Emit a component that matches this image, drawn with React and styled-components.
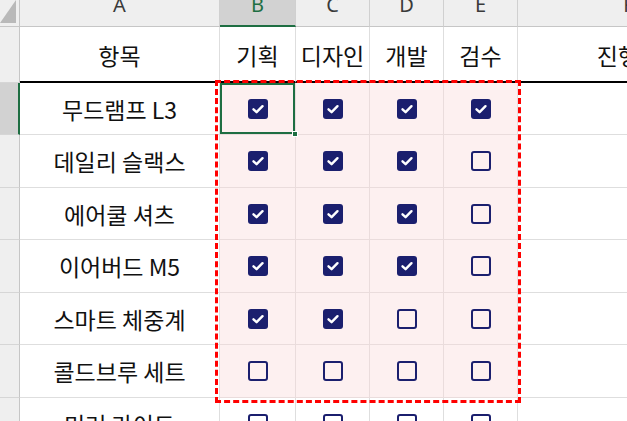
import React from "react";
import styled, { createGlobalStyle, css } from "styled-components";

const GlobalStyle = createGlobalStyle`
  html, body {
    margin: 0;
    padding: 0;
    background: #ffffff;
    overflow: hidden;
  }
  body {
    font-family: "Noto Sans CJK KR", "Noto Sans", sans-serif;
  }
`;

const NAVY = "#1b1f6e";
const GREEN = "#1e6e42";

const Sheet = styled.div`
  position: relative;
  display: grid;
  grid-template-columns: 20px 200px 76px 74px 74px 74px 222px;
  grid-template-rows: 27px 56px 52px 53px 52px 53px 52px 53px 52px;
  width: 740px;
`;

const Corner = styled.div`
  background: #efefef;
  border-right: 1px solid #c6c6c6;
  border-bottom: 1px solid #c6c6c6;
  box-sizing: border-box;
  display: flex;
  align-items: flex-end;
  justify-content: flex-end;
  padding: 0 3px 3px 0;
`;

const CornerMark = styled.div`
  width: 16px;
  height: 23px;
  background: #b9b9b9;
  clip-path: polygon(100% 0, 100% 100%, 0 100%);
`;

const ColHead = styled.div`
  box-sizing: border-box;
  background: ${(p) => (p.$active ? "#d2d2d2" : "#efefef")};
  border-right: 1px solid #d0d0d0;
  border-bottom: ${(p) => (p.$active ? `2px solid ${GREEN}` : "1px solid #c6c6c6")};
  color: ${(p) => (p.$active ? GREEN : "#3a3a3a")};
  font-family: "Noto Sans", "Liberation Sans", sans-serif;
  font-size: 20px;
  line-height: 20px;
  text-align: center;
  overflow: hidden;
`;

const ColLabel = styled.div`
  margin-top: -5px;
`;

const RowHead = styled.div`
  box-sizing: border-box;
  background: ${(p) => (p.$active ? "#d2d2d2" : "#efefef")};
  border-right: ${(p) => (p.$active ? `2px solid ${GREEN}` : "1px solid #c6c6c6")};
  border-bottom: 1px solid #d6d6d6;
`;

const Cell = styled.div`
  position: relative;
  box-sizing: border-box;
  display: flex;
  align-items: center;
  justify-content: center;
  background: #ffffff;
  border-right: 1px solid #dedede;
  border-bottom: 1px solid #dedede;
  font-size: 23px;
  color: #111111;
  white-space: nowrap;
  overflow: visible;

  ${(p) =>
    p.$pink &&
    css`
      background: #fdf0f0;
      border-right-color: #eadcdc;
      border-bottom-color: #eadcdc;
    `}

  ${(p) =>
    p.$head &&
    css`
      border-bottom: 2px solid #000000;
      padding-top: 2px;
    `}

  ${(p) =>
    p.$selected &&
    css`
      box-shadow: inset 0 0 0 2px ${GREEN};
    `}
`;

const Handle = styled.span`
  position: absolute;
  right: -3px;
  bottom: -3px;
  width: 6px;
  height: 6px;
  background: ${GREEN};
  border: 1px solid #ffffff;
  box-sizing: border-box;
  z-index: 2;
`;

const Box = styled.span`
  box-sizing: border-box;
  width: 20px;
  height: 20px;
  border-radius: 3px;
  display: flex;
  align-items: center;
  justify-content: center;
  background: ${(p) => (p.$checked ? NAVY : "transparent")};
  border: ${(p) => (p.$checked ? "none" : `2.5px solid ${NAVY}`)};
`;

const Marquee = styled.div`
  position: absolute;
  left: 215px;
  top: 80px;
  width: 306px;
  height: 323px;
  box-sizing: border-box;
  border: 3px dashed #ff0000;
  pointer-events: none;
  z-index: 3;
`;

const Checkbox = ({ checked }) => (
  <Box $checked={checked}>
    {checked && (
      <svg width="20" height="20" viewBox="0 0 20 20">
        <polyline
          points="5.5,10.3 8.6,13.2 14.5,7.2"
          fill="none"
          stroke="#ffffff"
          strokeWidth="2.4"
          strokeLinecap="round"
          strokeLinejoin="round"
        />
      </svg>
    )}
  </Box>
);

const letters = ["A", "B", "C", "D", "E", "F"];
const heads = ["항목", "기획", "디자인", "개발", "검수", "진행률"];

const items = [
  ["무드램프 L3", [1, 1, 1, 1]],
  ["데일리 슬랙스", [1, 1, 1, 0]],
  ["에어쿨 셔츠", [1, 1, 1, 0]],
  ["이어버드 M5", [1, 1, 1, 0]],
  ["스마트 체중계", [1, 1, 0, 0]],
  ["콜드브루 세트", [0, 0, 0, 0]],
  ["미러 라이트", [0, 0, 0, 0]],
];

export default function App() {
  return (
    <>
      <GlobalStyle />
      <Sheet>
        <Corner>
          <CornerMark />
        </Corner>
        {letters.map((l) => (
          <ColHead key={l} $active={l === "B"}>
            <ColLabel>{l}</ColLabel>
          </ColHead>
        ))}

        <RowHead />
        {heads.map((h) => (
          <Cell key={h} $head>
            {h}
          </Cell>
        ))}

        {items.map(([name, checks], r) => {
          const pink = r < 6;
          return (
            <React.Fragment key={name}>
              <RowHead $active={r === 0} />
              <Cell>{name}</Cell>
              {checks.map((c, i) => (
                <Cell key={i} $pink={pink} $selected={r === 0 && i === 0}>
                  <Checkbox checked={!!c} />
                  {r === 0 && i === 0 && <Handle />}
                </Cell>
              ))}
              <Cell />
            </React.Fragment>
          );
        })}
        <Marquee />
      </Sheet>
    </>
  );
}
